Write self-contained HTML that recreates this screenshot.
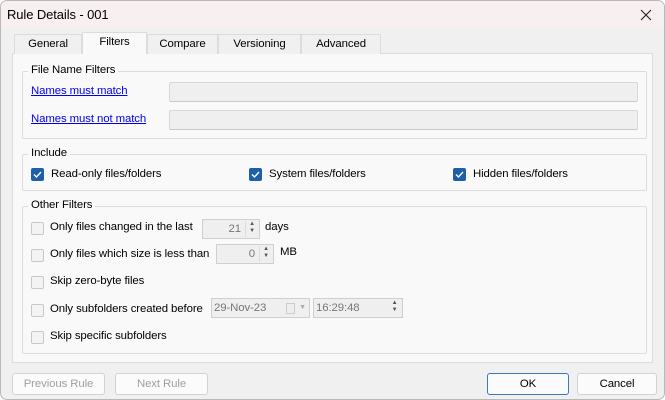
<!DOCTYPE html>
<html><head><style>
*{box-sizing:border-box;margin:0;padding:0}
body{width:665px;height:400px;overflow:hidden;background:#fff;font-family:"Liberation Sans",sans-serif;font-size:11.4px;letter-spacing:-0.1px;color:#000;position:relative}
.a{position:absolute}
.win{left:0;top:0;width:665px;height:400px;background:#f0f0f0;border:1px solid #b9b9b9;border-radius:7px;overflow:hidden}
.title{left:0;top:0;width:665px;height:28px;background:#f8eff1}
.tab{top:33px;height:20px;border:1px solid #dcdcdc;border-bottom:none;background:#f0f0f0;text-align:center;line-height:19px}
.panel{left:11px;top:52px;width:641px;height:310px;background:#f9f9f9;border:1px solid #dcdcdc}
.grp{border:1px solid #dcdcdc;border-radius:2px}
.gl{background:#f9f9f9;padding:0 3px;line-height:14px}
.lnk{color:#0000ee;text-decoration:underline}
.inp{background:#efefef;border:1px solid #d8d8d8;border-bottom:1px solid #c9c9c9;border-radius:2px}
.cb{width:13px;height:13px;border:1px solid #c8c8c8;background:#f3f3f3;border-radius:2px}
.cbc{width:13px;height:13px;background:#1f5faa;border-radius:2px}
.spin{background:#efefef;border:1px solid #cfcfcf;color:#777;text-align:right;line-height:18px}
.arr{position:absolute;right:1px;top:1px;width:13px;height:16px;border-left:1px solid #ddd;font-size:6px;line-height:7px;text-align:center;color:#555}
.btn{height:22px;border:1px solid #d2d2d2;border-radius:3px;background:#fbfbfb;text-align:center;line-height:20px}
</style></head><body>
<div class="a win">
<div class="a title"></div>
<div class="a" style="left:6px;top:6px;font-size:13px">Rule Details - 001</div>
<svg class="a" style="left:639px;top:8px" width="12" height="12"><path d="M1 1L11 11M11 1L1 11" stroke="#222" stroke-width="1.1"/></svg>
<div class="a panel"></div>
<div class="a tab" style="left:13px;width:68px">General</div>
<div class="a tab" style="left:81px;width:65px;top:31px;height:22px;background:#f9f9f9;line-height:19px">Filters</div>
<div class="a tab" style="left:146px;width:71px">Compare</div>
<div class="a tab" style="left:217px;width:83px">Versioning</div>
<div class="a tab" style="left:300px;width:80px">Advanced</div>

<div class="a grp" style="left:21px;top:70px;width:625px;height:68px"></div>
<div class="a gl" style="left:27px;top:62px">File Name Filters</div>
<div class="a lnk" style="left:30px;top:84px">Names must match</div>
<div class="a inp" style="left:168px;top:81px;width:469px;height:20px"></div>
<div class="a lnk" style="left:30px;top:112px">Names must not match</div>
<div class="a inp" style="left:168px;top:109px;width:469px;height:20px"></div>

<div class="a grp" style="left:21px;top:153px;width:625px;height:37px"></div>
<div class="a gl" style="left:27px;top:145px">Include</div>
<div class="a cbc" style="left:30px;top:167px"><svg width="13" height="13"><path d="M3 6.5L5.5 9L10 4" stroke="#fff" stroke-width="1.4" fill="none"/></svg></div>
<div class="a" style="left:50px;top:167px">Read-only files/folders</div>
<div class="a cbc" style="left:248px;top:167px"><svg width="13" height="13"><path d="M3 6.5L5.5 9L10 4" stroke="#fff" stroke-width="1.4" fill="none"/></svg></div>
<div class="a" style="left:268px;top:167px">System files/folders</div>
<div class="a cbc" style="left:452px;top:167px"><svg width="13" height="13"><path d="M3 6.5L5.5 9L10 4" stroke="#fff" stroke-width="1.4" fill="none"/></svg></div>
<div class="a" style="left:472px;top:167px">Hidden files/folders</div>

<div class="a grp" style="left:21px;top:205px;width:625px;height:148px"></div>
<div class="a gl" style="left:27px;top:197px">Other Filters</div>
<div class="a cb" style="left:30px;top:221px"></div>
<div class="a" style="left:49px;top:220px">Only files changed in the last</div>
<div class="a spin" style="left:201px;top:218px;width:58px;height:20px;padding-right:18px">21<div class="arr">▲<br>▼</div></div>
<div class="a" style="left:264px;top:220px">days</div>
<div class="a cb" style="left:30px;top:248px"></div>
<div class="a" style="left:49px;top:247px">Only files which size is less than</div>
<div class="a spin" style="left:215px;top:243px;width:58px;height:20px;padding-right:18px">0<div class="arr">▲<br>▼</div></div>
<div class="a" style="left:279px;top:245px">MB</div>
<div class="a cb" style="left:30px;top:275px"></div>
<div class="a" style="left:49px;top:274px">Skip zero-byte files</div>
<div class="a cb" style="left:30px;top:303px"></div>
<div class="a" style="left:49px;top:302px">Only subfolders created before</div>
<div class="a spin" style="left:210px;top:297px;width:99px;height:20px;text-align:left;padding-left:2px">29-Nov-23<span style="position:absolute;right:14px;top:4px;width:9px;height:11px;border:1px solid #ccc;background:#eee"></span><span style="position:absolute;right:3px;top:0;font-size:7px;color:#aaa">▼</span></div>
<div class="a spin" style="left:312px;top:297px;width:90px;height:20px;text-align:left;padding-left:2px">16:29:48<div class="arr" style="border:none">▲<br>▼</div></div>
<div class="a cb" style="left:30px;top:330px"></div>
<div class="a" style="left:49px;top:329px">Skip specific subfolders</div>

<div class="a btn" style="left:11px;top:372px;width:93px;color:#a0a0a0">Previous Rule</div>
<div class="a btn" style="left:114px;top:372px;width:93px;color:#a0a0a0">Next Rule</div>
<div class="a btn" style="left:486px;top:372px;width:82px;border:1px solid #3b78c4">OK</div>
<div class="a btn" style="left:576px;top:372px;width:80px">Cancel</div>
</div>
</body></html>
